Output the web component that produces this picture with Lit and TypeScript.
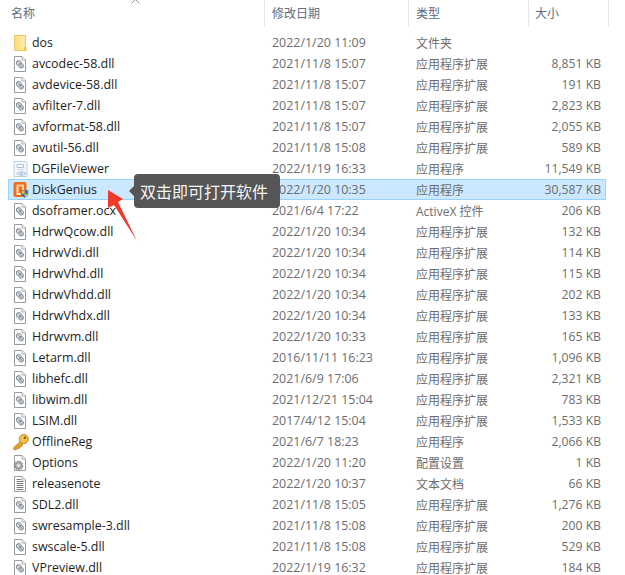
import { LitElement, html, css, svg } from "lit";
import { customElement } from "lit/decorators.js";

type Kind = "folder" | "dll" | "viewer" | "disk" | "key" | "cfg" | "txt";
type Row = [string, string, string, string, Kind];

const EXT = "应用程序扩展";
const APP = "应用程序";
const rows: Row[] = [
  ["dos", "2022/1/20 11:09", "文件夹", "", "folder"],
  ["avcodec-58.dll", "2021/11/8 15:07", EXT, "8,851 KB", "dll"],
  ["avdevice-58.dll", "2021/11/8 15:07", EXT, "191 KB", "dll"],
  ["avfilter-7.dll", "2021/11/8 15:07", EXT, "2,823 KB", "dll"],
  ["avformat-58.dll", "2021/11/8 15:07", EXT, "2,055 KB", "dll"],
  ["avutil-56.dll", "2021/11/8 15:08", EXT, "589 KB", "dll"],
  ["DGFileViewer", "2022/1/19 16:33", APP, "11,549 KB", "viewer"],
  ["DiskGenius", "2022/1/20 10:35", APP, "30,587 KB", "disk"],
  ["dsoframer.ocx", "2021/6/4 17:22", "ActiveX 控件", "206 KB", "dll"],
  ["HdrwQcow.dll", "2022/1/20 10:34", EXT, "132 KB", "dll"],
  ["HdrwVdi.dll", "2022/1/20 10:34", EXT, "114 KB", "dll"],
  ["HdrwVhd.dll", "2022/1/20 10:34", EXT, "115 KB", "dll"],
  ["HdrwVhdd.dll", "2022/1/20 10:34", EXT, "202 KB", "dll"],
  ["HdrwVhdx.dll", "2022/1/20 10:34", EXT, "133 KB", "dll"],
  ["Hdrwvm.dll", "2022/1/20 10:33", EXT, "165 KB", "dll"],
  ["Letarm.dll", "2016/11/11 16:23", EXT, "1,096 KB", "dll"],
  ["libhefc.dll", "2021/6/9 17:06", EXT, "2,321 KB", "dll"],
  ["libwim.dll", "2021/12/21 15:04", EXT, "783 KB", "dll"],
  ["LSIM.dll", "2017/4/12 15:04", EXT, "1,533 KB", "dll"],
  ["OfflineReg", "2021/6/7 18:23", APP, "2,066 KB", "key"],
  ["Options", "2022/1/20 11:20", "配置设置", "1 KB", "cfg"],
  ["releasenote", "2022/1/20 10:37", "文本文档", "66 KB", "txt"],
  ["SDL2.dll", "2021/11/8 15:05", EXT, "1,276 KB", "dll"],
  ["swresample-3.dll", "2021/11/8 15:08", EXT, "200 KB", "dll"],
  ["swscale-5.dll", "2021/11/8 15:08", EXT, "529 KB", "dll"],
  ["VPreview.dll", "2022/1/19 16:32", EXT, "184 KB", "dll"],
];

const page = svg`<path d="M1.5 .5H9L12.5 4V15.5H1.5Z" fill="#fff" stroke="#9a9a9a"/><path d="M9 .5V4H12.5" fill="#eee" stroke="#b0b0b0"/>`;
const icons: Record<Kind, unknown> = {
  folder: svg`<defs><linearGradient id="fg" x1="0" x2="1" y1="0" y2="0"><stop offset="0" stop-color="#fbdc74"/><stop offset="1" stop-color="#fdeeb4"/></linearGradient></defs><path d="M1.5 .5H12.5V15.5H1.5Z" fill="url(#fg)" stroke="#ecc968"/><path d="M11 12H13.5V16H11Z" fill="#efc444"/>`,
  dll: svg`${page}<circle cx="5.8" cy="7" r="2.5" fill="#e2e8ed" stroke="#7f8c97"/><circle cx="8.2" cy="9.8" r="2.3" fill="#cfd8df" stroke="#7f8c97"/><path d="M4.3 5L9.4 11" stroke="#5f6b75" stroke-width=".7"/>`,
  viewer: svg`<path d="M1 .5H13L14 1.5V15.5H1Z" fill="#f4f8fd" stroke="#bcd0e6"/><path d="M4 3.5H10.5V6.5H4Z" fill="#fff" stroke="#a9c3e0"/><path d="M4 8.5H11" stroke="#c6d8ea"/><path d="M3.5 12.5Q8 8.7 13 12.5Q8 15.8 3.5 12.5Z" fill="#e6eff8" stroke="#a9c3e0"/><circle cx="8.2" cy="12.4" r="1.2" fill="#a9c3e0"/>`,
  disk: svg`<rect x=".5" y="0" width="13" height="15" rx="2" fill="#ee6d1e"/><path d="M3.5 2.5H11V8H9V4.5H3.5Z" fill="#f9d59e"/><path d="M3.5 4.5H5.5V11H8V13H3.5Z" fill="#fbe3c4"/><path d="M8.2 8.3L15.2 8.3V12.5L11.7 16L8.2 12.5Z" fill="#2c6fc5"/><path d="M8.8 8.8H11.7V11.8H8.8Z" fill="#f3c130"/><path d="M11.7 11.8H14.7V12.5L11.7 15.2Z" fill="#f3c130"/>`,
  key: svg`<path d="M8 7L.8 13.4V15.6H3.6L5 14.2H6.4V12.8H7.8L10 10.8" fill="#e0a126" stroke="#a56f10" stroke-width=".7"/><circle cx="10.8" cy="5" r="4.6" fill="#f2c24a" stroke="#b07a14" stroke-width=".8"/><circle cx="12" cy="3.8" r="1.2" fill="#8a5c0c"/>`,
  cfg: svg`${page}<circle cx="5.5" cy="10.5" r="3.8" fill="none" stroke="#8b8b8b" stroke-width="2" stroke-dasharray="1.6 .7"/><circle cx="5.5" cy="10.5" r="3" fill="#c4c4c4" stroke="#777" stroke-width=".7"/><circle cx="5.5" cy="10.5" r="1" fill="#fff"/>`,
  txt: svg`${page}<path d="M3.5 3.5H8M3.5 5.5H10.5M3.5 7.5H10.5M3.5 9.5H10.5M3.5 11.5H10.5M3.5 13.5H10.5" stroke="#7c7c7c"/>`,
};

@customElement("app-root")
export class AppRoot extends LitElement {
  static styles = css`
    :host {
      display: block;
      position: relative;
      width: 625px;
      height: 575px;
      overflow: hidden;
      background: #fff;
      font-family: "Open Sans", "Noto Sans CJK SC", sans-serif;
      font-size: 12px;
    }
    .grid {
      display: grid;
      grid-template-columns: 24px 233px 144px 120px 72px;
      margin-left: 8px;
      width: 598px;
      align-items: center;
    }
    .head {
      height: 26px;
      color: #5d6b7a;
      margin-bottom: 6px;
      align-items: stretch;
      width: 602px;
    }
    .head > div {
      display: flex;
      align-items: center;
      border-right: 1px solid #e5e5e5;
      padding-left: 7px;
    }
    .head .name {
      grid-column: 1 / 3;
      padding-left: 3px;
    }
    .head .hsize { padding-left: 6px; width: 73px; }
    .row {
      height: 21px;
      color: #6d6d6d;
      box-sizing: border-box;
    }
    .row.sel {
      background: #cce8ff;
      outline: 1px solid #99d1ff;
      outline-offset: -1px;
    }
    .icon { width: 16px; height: 16px; margin-left: 5px; display: block; }
    .fname { color: #1e1e1e; white-space: nowrap; font-size: 12.45px; }
    .date { padding-left: 7px; white-space: nowrap; font-size: 12.45px; }
    .type { padding-left: 7px; white-space: nowrap; }
    .size { text-align: right; white-space: nowrap; font-size: 12.2px; }
    .sort {
      position: absolute;
      left: 131px;
      top: -1px;
      width: 9px;
      height: 5px;
    }
    .tip {
      position: absolute;
      left: 134px;
      top: 174px;
      width: 146px;
      height: 34px;
      box-sizing: border-box;
      padding-left: 6px;
      display: flex;
      align-items: center;
      background: #565656;
      border-radius: 4px;
      color: #f4f4f4;
      font-size: 16px;
      white-space: nowrap;
    }
    .tip::before {
      content: "";
      position: absolute;
      left: -5px;
      top: 12px;
      border-style: solid;
      border-width: 5px 5px 5px 0;
      border-color: transparent #565656 transparent transparent;
    }
    .arrow {
      position: absolute;
      left: 100px;
      top: 185px;
      width: 45px;
      height: 60px;
    }
  `;

  render() {
    return html`
      <div class="grid head">
        <div class="name">名称</div>
        <div>修改日期</div>
        <div>类型</div>
        <div class="hsize">大小</div>
      </div>
      ${rows.map(
        ([n, d, t, s, k], i) => html`
          <div class="grid row ${i === 7 ? "sel" : ""}">
            <svg class="icon" viewBox="0 0 16 16">${icons[k]}</svg>
            <div class="fname">${n}</div>
            <div class="date">${d}</div>
            <div class="type">${t}</div>
            <div class="size">${s}</div>
          </div>
        `
      )}
      <svg class="sort" viewBox="0 0 9 5">
        <path d="M.5 4.5L4.5 .5L8.5 4.5" fill="none" stroke="#9a9a9a" />
      </svg>
      <div class="tip">双击即可打开软件</div>
      <svg class="arrow" viewBox="100 185 45 60">
        <path d="M108 190L123 199L118 202L137 241L114 205L108 208Z" fill="#f0382c" />
      </svg>
    `;
  }
}
